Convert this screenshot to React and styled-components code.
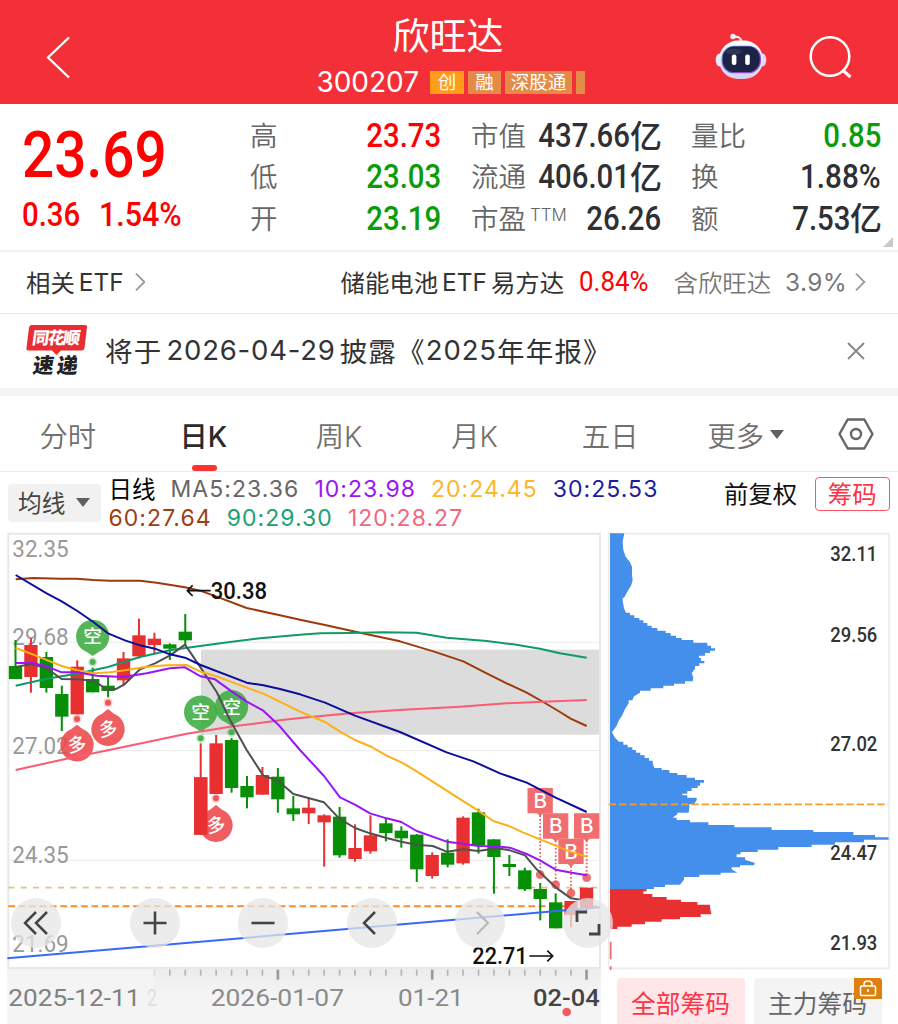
import React from "react";
import styled, { createGlobalStyle } from "styled-components";

const GlobalStyle = createGlobalStyle`
  * {
    box-sizing: border-box;
  }
  body {
    margin: 0;
    background: #fff;
    font-family: Inter, "Noto Sans CJK SC", sans-serif;
    color: #333;
  }
  button {
    border: 0;
    padding: 0;
    background: none;
    font: inherit;
    color: inherit;
  }
`;

const RED = "#fe0000";
const GREEN = "#0a9c0a";
const DARK = "#2f3033";

const Page = styled.div`
  width: 898px;
  height: 1024px;
  overflow: hidden;
  background: #fff;
`;

const Header = styled.header`
  display: grid;
  grid-template-columns: 300px 300px 1fr;
  height: 104px;
  background: #f33038;
  color: #fff;
`;

const BackButton = styled.button`
  display: flex;
  padding: 35px 0 0 44px;
`;

const TitleBlock = styled.div`
  display: flex;
  flex-direction: column;
  align-items: center;
  padding-top: 12px;
`;

const Title = styled.h1`
  margin: 0;
  font-family: "Noto Sans CJK SC", sans-serif;
  font-size: 37px;
  font-weight: 400;
  line-height: 44px;
  margin-left: -4px;
`;

const CodeLine = styled.div`
  display: flex;
  align-items: center;
  gap: 4px;
  height: 23px;
  margin: 15px -1px 0 0;
`;

const Code = styled.span`
  font-size: 28px;
  font-weight: 400;
  line-height: 23px;
  margin-right: 7px;
`;

const Tag = styled.span`
  height: 23px;
  width: ${(p) => p.$width}px;
  background: ${(p) => p.$color || "#e58b48"};
  font-family: "Noto Sans CJK SC", sans-serif;
  font-size: 18.5px;
  line-height: 21px;
  text-align: center;
  white-space: nowrap;
`;

const HeaderActions = styled.div`
  display: flex;
  align-items: flex-start;
  gap: 41px;
  padding: 32px 0 0 115px;
`;

const Quote = styled.section`
  display: grid;
  grid-template-columns: 228px 191px 190px 190px;
  position: relative;
  height: 148px;
  padding: 11px 0 0 22px;
  border-bottom: 2px solid #f1f1f1;
`;

const PriceBlock = styled.div`
  color: ${RED};
`;

const Digits = styled.span`
  display: inline-block;
  font-family: Roboto, sans-serif;
  font-size: ${(p) => p.$size || 33}px;
  font-weight: ${(p) => p.$weight || 500};
  transform: scaleX(${(p) => p.$squeeze || 0.89});
  transform-origin: ${(p) => p.$origin || "right"} center;
  white-space: nowrap;
`;

const LastPrice = styled.div`
  height: 80px;
  line-height: 80px;
`;

const Changes = styled.div`
  display: flex;
  height: 40px;
  line-height: 40px;
`;

const Change = styled.div`
  width: ${(p) => p.$width}px;
`;

const StatColumn = styled.div`
  display: flex;
  flex-direction: column;
  margin-left: ${(p) => p.$shift || 0}px;
  margin-right: ${(p) => -(p.$shift || 0)}px;
`;

const Stat = styled.div`
  display: flex;
  justify-content: space-between;
  align-items: center;
  height: 41.3px;
`;

const StatLabel = styled.span`
  font-family: "Noto Sans CJK SC", sans-serif;
  font-size: 27.5px;
  line-height: 40px;
  margin-top: -3px;
  font-weight: 350;
  color: #666;
  white-space: nowrap;
`;

const Ttm = styled.sup`
  display: inline-block;
  font-family: Inter, sans-serif;
  font-size: 17px;
  font-weight: 350;
  line-height: 1;
  vertical-align: 8px;
  margin-left: 4px;
`;

const StatValue = styled.span`
  display: flex;
  align-items: center;
  color: ${(p) => p.$color || DARK};
`;

const Unit = styled.span`
  font-family: "Noto Sans CJK SC", sans-serif;
  font-size: 32px;
  font-weight: 500;
  line-height: 36px;
  margin: -4px -1px 0 0;
`;

const Corner = styled.i`
  position: absolute;
  right: 5px;
  bottom: 3px;
  border: 5px solid #c9c9c9;
  border-top-color: transparent;
  border-left-color: transparent;
`;

const EtfRow = styled.section`
  display: flex;
  align-items: center;
  height: 62px;
  padding: 0 32px 2px 26px;
  border-bottom: 1px solid #ebebeb;
  font-size: 24.4px;
  line-height: 36px;
`;

const EtfText = styled.span`
  display: flex;
  align-items: center;
  gap: 4px;
  margin-left: ${(p) => p.$left || 0}px;
  color: ${(p) => p.$color || "#333"};
  white-space: nowrap;
`;

const Cjk = styled.span`
  font-family: "Noto Sans CJK SC", sans-serif;
  font-weight: ${(p) => p.$weight || 400};
`;

const Latin = styled.span`
  font-weight: ${(p) => p.$weight || 400};
  letter-spacing: ${(p) => p.$spacing || 0}px;
`;

const Notice = styled.section`
  display: flex;
  align-items: center;
  height: 74px;
  padding: 0 33px 0 24px;
`;

const NoticeText = styled.p`
  display: flex;
  align-items: center;
  flex: 1;
  margin: 0 0 3px 15px;
  font-size: 27.5px;
  line-height: 40px;
  letter-spacing: 1.2px;
  white-space: nowrap;
`;

const NoticeDate = styled.span`
  margin: 0 4px 0 4px;
  letter-spacing: 0.8px;
`;

const Divider = styled.div`
  height: 8px;
  background: #f4f4f4;
`;

const Tabs = styled.nav`
  display: flex;
  height: 76px;
  border-bottom: 1px solid #ebebeb;
`;

const Tab = styled.button`
  display: flex;
  align-items: center;
  justify-content: center;
  position: relative;
  width: 135.6px;
  padding-top: 1px;
  font-family: Inter, "Noto Sans CJK SC", sans-serif;
  font-size: 28.3px;
  font-weight: ${(p) => (p.$active ? 500 : 350)};
  color: ${(p) => (p.$active ? "#2b2b2b" : "#707070")};
`;

const TabUnderline = styled.i`
  position: absolute;
  left: 56px;
  bottom: 0;
  width: 25px;
  height: 6.5px;
  border-radius: 4px;
  background: #fb342f;
`;

const Caret = styled.i`
  width: 0;
  height: 0;
  margin-left: ${(p) => p.$left}px;
  border: 7px solid transparent;
  border-top: 9px solid #606060;
  border-bottom: 0;
`;

const SettingsButton = styled.button`
  display: flex;
  align-items: center;
  justify-content: center;
  flex: 1;
`;

const IndicatorBar = styled.div`
  display: flex;
  height: 60px;
`;

const AverageSelect = styled.button`
  display: flex;
  align-items: center;
  width: 93px;
  height: 38px;
  margin: 12px 0 0 8px;
  padding: 0 0 2px 10px;
  border-radius: 4px;
  background: #f1f1f1;
  font-family: "Noto Sans CJK SC", sans-serif;
  font-size: 23.7px;
  color: #444;
`;

const Legend = styled.div`
  width: 623px;
  padding: 3px 0 0 7.5px;
`;

const LegendLine = styled.div`
  display: flex;
  gap: 15px;
  height: 29px;
  align-items: center;
  white-space: nowrap;
`;

const LegendItem = styled.span`
  color: ${(p) => p.$color};
  font-size: ${(p) => (p.$name ? 23.5 : 23)}px;
  font-weight: 400;
  line-height: 29px;
  letter-spacing: ${(p) => (p.$name ? 0 : 1.05)}px;
`;

const Adjust = styled.button`
  height: 40px;
  font-family: "Noto Sans CJK SC", sans-serif;
  font-size: 24.4px;
  color: #111;
  white-space: nowrap;
`;

const ChipToggle = styled.button`
  width: 75px;
  height: 34px;
  margin: 5px 0 0 17.5px;
  padding-bottom: 3px;
  border: 1.5px solid #fb5565;
  border-radius: 4px;
  font-family: "Noto Sans CJK SC", sans-serif;
  font-size: 24.4px;
  line-height: 28px;
  color: #fb3547;
`;

const ChartRow = styled.section`
  display: flex;
  position: relative;
  height: 492px;
`;

const ChartSvg = styled.svg`
  display: block;
  flex: none;
`;

const ChipColumn = styled.aside`
  width: 292px;
`;

const ChipTabs = styled.div`
  display: flex;
  gap: 9px;
  padding: 8px 0 0 10.5px;
`;

const ChipTab = styled.button`
  position: relative;
  width: 128px;
  height: 52px;
  padding-bottom: 5px;
  border-radius: 4px;
  background: ${(p) => (p.$active ? "#ffe7e9" : "#f4f4f4")};
  color: ${(p) => (p.$active ? "#fb3547" : "#666")};
  font-family: "Noto Sans CJK SC", sans-serif;
  font-size: 24.7px;
  line-height: 40px;
`;

const LockBadge = styled.span`
  position: absolute;
  top: 0;
  right: 0;
  display: flex;
  justify-content: center;
  width: 28px;
  height: 21px;
  border-radius: 0 3px 0 3px;
  background: #de800c;
`;

const ChartTools = styled.div`
  position: absolute;
  left: 11px;
  top: 366px;
  display: flex;
  gap: 58.4px;
`;

const ToolButton = styled.button`
  display: flex;
  align-items: center;
  justify-content: center;
  width: 50px;
  height: 50px;
  margin-right: ${(p) => p.$right || 0}px;
  border-radius: 50%;
  background: rgba(230, 230, 230, 0.76);
  color: ${(p) => (p.$disabled ? "#b9b9b9" : "#444")};
`;

// Chart geometry is kept at 3x resolution; [bodyTop, bodyBottom, high, low, up]
const CANDLES = [
  [408, 447, 330, 447, 0],
  [345, 441, 325, 488, 1],
  [381, 474, 366, 488, 0],
  [492, 560, 467, 603, 0],
  [410, 553, 391, 553, 1],
  [447, 487, 413, 487, 0],
  [467, 483, 441, 502, 0],
  [385, 451, 366, 467, 1],
  [316, 379, 266, 385, 1],
  [326, 345, 308, 373, 1],
  [343, 356, 340, 390, 0],
  [305, 331, 252, 345, 0],
  [742, 914, 640, 914, 1],
  [640, 792, 615, 792, 1],
  [630, 774, 624, 788, 0],
  [768, 802, 738, 835, 0],
  [735, 794, 711, 794, 1],
  [740, 808, 714, 848, 0],
  [835, 853, 798, 873, 0],
  [833, 850, 805, 882, 1],
  [856, 877, 853, 1010, 1],
  [860, 976, 831, 983, 0],
  [954, 987, 883, 995, 1],
  [916, 964, 856, 971, 1],
  [880, 909, 866, 934, 0],
  [902, 925, 889, 953, 0],
  [914, 1018, 912, 1056, 0],
  [975, 1038, 967, 1046, 1],
  [968, 1004, 928, 1012, 0],
  [863, 1000, 859, 1004, 1],
  [847, 947, 836, 971, 0],
  [928, 981, 928, 1091, 0],
  [1002, 1011, 975, 1038, 0],
  [1021, 1078, 1013, 1083, 0],
  [1077, 1107, 1059, 1171, 0],
  [1117, 1195, 1090, 1195, 0],
  [1113, 1155, 1113, 1192, 1],
  [1073, 1133, 1073, 1150, 1],
];

const candleX = (i) => 46.5 + i * 46.3;

const AVERAGES = [
  {
    color: "#9c3a0c",
    points:
      "47,148 100,144 180,146 230,146 280,150 330,152 420,152 470,158 555,172 600,182 650,200 740,234 840,256 900,269 975,285 1080,308 1200,334 1300,364 1390,394 1460,430 1520,460 1580,488 1630,516 1680,546 1712,566 1760,588",
  },
  {
    color: "#109a68",
    points:
      "47,467 140,446 230,431 324,411 420,381 510,361 600,348 690,336 780,325 900,314 960,310 1050,309 1150,307 1250,308 1340,323 1460,333 1540,343 1620,356 1680,370 1760,383",
  },
  {
    color: "#fb5b73",
    points:
      "47,720 200,686 324,661 560,611 700,589 840,571 900,564 1050,550 1210,539 1380,530 1520,520 1630,515 1760,510",
  },
  {
    color: "#505050",
    points:
      "47,411 95,402 140,415 185,447 232,448 280,452 324,480 350,476 372,464 420,418 465,400 510,376 555,344 600,410 650,486 690,570 740,660 790,737 835,753 880,792 900,797 972,817 1018,866 1065,894 1110,910 1160,924 1204,935 1250,944 1298,948 1340,965 1390,958 1435,963 1490,955 1530,961 1575,976 1610,1018 1667,1072 1713,1105 1740,1109 1760,1111",
  },
  {
    color: "#0c0c9e",
    points:
      "47,135 140,190 185,214 232,243 280,276 324,310 375,331 420,346 465,356 510,373 555,383 602,405 740,458 790,466 840,477 900,493 975,518 1065,557 1200,606 1340,667 1420,694 1500,730 1580,758 1667,803 1760,846",
  },
  {
    color: "#fdb014",
    points:
      "47,354 100,374 185,408 232,421 280,430 330,427 375,421 440,410 500,406 560,405 602,425 650,439 740,473 790,491 850,520 900,545 975,576 1020,605 1065,630 1115,651 1160,677 1210,700 1250,724 1340,782 1430,839 1480,873 1530,889 1570,908 1630,932 1710,965 1760,980",
  },
  {
    color: "#9a14f8",
    points:
      "47,399 95,399 140,409 185,427 232,427 290,437 370,441 440,430 510,415 555,412 602,439 645,448 695,484 740,515 790,542 835,584 900,660 972,738 1020,802 1065,824 1110,850 1160,865 1204,876 1250,903 1340,935 1390,941 1435,948 1490,949 1530,953 1580,972 1620,991 1667,1019 1720,1029 1760,1036",
  },
];

const BEAR_PINS = [
  [278, 320, 396],
  [602, 547, 625],
  [694.5, 531, 607],
];

const BULL_PINS = [
  [231, 644, 567],
  [324, 597, 518],
  [648, 885, 805],
];

const BUYS = [
  [1620.5, 812, 1034],
  [1667, 888, 1064],
  [1713, 964, 1089],
  [1760, 888, 1043],
];

const PRICE_LABELS = [
  ["32.35", 82],
  ["29.68", 345],
  ["27.02", 672],
  ["24.35", 1000],
  ["21.69", 1265],
];

const CHIPS_ABOVE = [
  [73, 10], [68, 35], [70, 60], [77, 80], [90, 97], [96, 110], [96, 135], [98, 150],
  [94, 165], [85, 180], [72, 203], [68, 212], [72, 235], [78, 248], [90, 256], [103, 264],
  [118, 271], [130, 279], [142, 287], [155, 294], [172, 302], [197, 309], [212, 317],
  [228, 324], [245, 330], [280, 338], [322, 347], [333, 355], [345, 362], [330, 369],
  [315, 377], [297, 384], [303, 393], [313, 400], [298, 408], [285, 416], [275, 430],
  [280, 442], [278, 454], [255, 461], [222, 467], [190, 475], [152, 482], [120, 488],
  [102, 499], [97, 511], [86, 520], [75, 537], [66, 557], [57, 570], [50, 587], [36, 607],
  [45, 623], [57, 635], [70, 644], [83, 652], [97, 660], [108, 668], [121, 676], [134, 684],
  [147, 692], [158, 700], [163, 714], [185, 720], [208, 729], [232, 735], [260, 743],
  [285, 750], [312, 758], [300, 767], [293, 774], [275, 783], [262, 791], [247, 796],
  [262, 803], [290, 811], [282, 823], [268, 830], [266, 848], [232, 853], [218, 863],
  [230, 870], [270, 877], [325, 885], [403, 892], [515, 900], [640, 906], [760, 915],
  [825, 922], [866, 929], [792, 937], [705, 944], [635, 951], [535, 959], [473, 966],
  [422, 973], [410, 982], [435, 989], [468, 1000], [463, 1006], [420, 1012], [395, 1018],
  [412, 1028], [362, 1034], [298, 1041], [252, 1049], [240, 1064], [195, 1071], [162, 1077],
];

const CHIPS_BELOW = [
  [140, 1084], [130, 1092], [157, 1101], [200, 1109], [243, 1116], [292, 1124], [330, 1131],
  [332, 1142], [334, 1153], [302, 1161], [240, 1168], [185, 1175], [135, 1183], [95, 1190],
  [52, 1197],
];

// each row is [width, bottom edge]; tall rows slope, thin rows are stepped
const stepPath = (rows, top) => {
  let prev = top;
  let d = `M30 ${top}`;
  rows.forEach(([x, y]) => {
    d += y - prev > 9 ? `L${x} ${y}` : `H${x}V${y}`;
    prev = y;
  });
  return d + "H30Z";
};

const CHIP_LABELS = [
  ["32.11", 92],
  ["29.56", 337],
  ["27.02", 663],
  ["24.47", 990],
  ["21.93", 1260],
];

const Pin = ({ x, y, dot, down, label }) => {
  const color = down ? "#3dac41" : "#ec4749";
  const tip = down ? y + 58 : y - 60;
  const edge = down ? y + 46 : y - 46;
  return (
    <g fill={color}>
      <circle cx={x} cy={dot} r="14" opacity=".25" />
      <circle cx={x} cy={dot} r="9" opacity=".9" />
      <path
        opacity=".88"
        d={`M${x + 18} ${edge}L${x} ${tip}L${x - 18} ${edge}A50 50 0 1 ${
          down ? 1 : 0
        } ${x + 18} ${edge}Z`}
      />
      <text
        x={x}
        y={y + 20}
        textAnchor="middle"
        fontFamily="Noto Sans CJK SC, sans-serif"
        fontSize="56"
        fontWeight="500"
        fill="#fff"
        transform={down ? undefined : `rotate(-8 ${x} ${y})`}
      >
        {label}
      </text>
    </g>
  );
};

const ChartText = ({ x, y, width, size = 72, fill = "#999", weight = 400, children }) => (
  <text
    x={x}
    y={y}
    textLength={width}
    lengthAdjust="spacingAndGlyphs"
    fontFamily="Roboto, sans-serif"
    fontSize={size}
    fontWeight={weight}
    fill={fill}
  >
    {children}
  </text>
);

const KLineChart = () => (
  <ChartSvg width="606" height="492" viewBox="0 6 1818 1476">
    <defs>
      <linearGradient id="axis" x1="0" y1="0" x2="0" y2="1">
        <stop offset="0" stopColor="#ececec" />
        <stop offset=".45" stopColor="#f4f4f4" />
      </linearGradient>
    </defs>
    <rect x="22" y="1317" width="1780" height="170" fill="#f4f4f4" />
    <rect x="460" y="1317" width="1342" height="170" fill="url(#axis)" />
    <rect x="603" y="359" width="1196" height="255" fill="#dcdcdc" />
    <g stroke="#eee" strokeWidth="4">
      <path d="M25 337H1799M25 662H1799M25 991H1799" />
    </g>
    <path d="M25 1314V11H1800V1314Z" fill="none" stroke="#e8e8e8" strokeWidth="6" />
    <path d="M25 1073H1800" stroke="#e0bf93" strokeWidth="5" strokeDasharray="18 19.2" />
    <path d="M25 1129H1800" stroke="#f98a2c" strokeWidth="6" strokeDasharray="20 11.2" />

    {PRICE_LABELS.map(([label, y]) => (
      <ChartText key={label} x={37} y={y} width={169} weight={450}>
        {label}
      </ChartText>
    ))}

    {CANDLES.map(([top, bottom, high, low, up], i) => (
      <g key={i} fill={up ? "#e83031" : "#079007"}>
        <rect x={candleX(i) - 3} y={high} width="6" height={low - high} />
        <rect x={candleX(i) - 20} y={top} width="40" height={bottom - top} />
      </g>
    ))}

    {BULL_PINS.map(([x, y, dot]) => (
      <Pin key={x} x={x} y={y} dot={dot} label="多" />
    ))}
    {BEAR_PINS.map(([x, y, dot]) => (
      <Pin key={x} x={x} y={y} dot={dot} down label="空" />
    ))}
    <rect x="582" y="742" width="40" height="172" fill="#e83031" />

    {BUYS.map(([x, y, dot]) => (
      <g key={x} fill="#ee5557">
        <path
          d={`M${x} ${y + 44}V${dot}`}
          stroke="#ee5557"
          strokeWidth="5"
          strokeDasharray="5 6"
        />
        <circle cx={x} cy={dot} r="13" opacity=".85" />
        <path
          d={`M${x - 38} ${y - 38}h76v76h-28l-10 9l-10 -9h-28z`}
          opacity=".85"
        />
        <text
          x={x}
          y={y + 22}
          textAnchor="middle"
          fontFamily="Inter, sans-serif"
          fontSize="62"
          fontWeight="500"
          fill="#fff"
        >
          B
        </text>
      </g>
    ))}

    <path d="M22 1285L1800 1132" stroke="#3868fb" strokeWidth="6" />
    {AVERAGES.map((line) => (
      <polyline
        key={line.color}
        points={line.points}
        fill="none"
        stroke={line.color}
        strokeWidth="6"
        strokeLinejoin="round"
      />
    ))}

    <g fill="none" stroke="#111" strokeWidth="5">
      <path d="M632 182H562M578 166L562 182L578 198" />
      <path d="M1588 1278H1658M1642 1262L1658 1278L1642 1294" />
    </g>
    <ChartText x={632} y={206} width={169} fill="#111" weight={500}>
      30.38
    </ChartText>
    <ChartText x={1417} y={1303} width={166} fill="#111" weight={500}>
      22.71
    </ChartText>

    {CANDLES.map((_, i) =>
      i < 9 ? null : (
        <rect
          key={i}
          x={candleX(i) - (i % 10 === 7 ? 4 : 2.5)}
          y="1319"
          width={i % 10 === 7 ? 8 : 5}
          height={i % 10 === 7 ? 30 : 18}
          fill={i === 9 ? "#ddd" : i % 10 === 7 ? "#999" : "#b5b5b5"}
        />
      )
    )}
    <ChartText x={25} y={1427} width={396} fill="#808080">
      2025-12-11
    </ChartText>
    <ChartText x={441} y={1427} width={30} fill="#dedede">
      2
    </ChartText>
    <ChartText x={632} y={1427} width={400} fill="#8a8a8a">
      2026-01-07
    </ChartText>
    <ChartText x={1194} y={1427} width={197} fill="#8a8a8a">
      01-21
    </ChartText>
    <ChartText x={1599} y={1427} width={200} fill="#444" weight={500}>
      02-04
    </ChartText>
    <circle cx="1700" cy="1446" r="13" fill="#f25a60" />
  </ChartSvg>
);

const ChipChart = () => (
  <ChartSvg width="292" height="438" viewBox="18 6 876 1314">
    <path
      d="M26 11H867V1315H26Z"
      fill="none"
      stroke="#ececec"
      strokeWidth="5"
    />
    <path d={stepPath(CHIPS_ABOVE, 10)} fill="#448feb" />
    <path d={stepPath(CHIPS_BELOW, 1077)} fill="#e83031" />
    <path d="M32 1235V1288M32 1309V1320" stroke="#e86a6c" strokeWidth="5" />
    <path
      d="M26 823H864"
      stroke="#f5a02c"
      strokeWidth="5"
      strokeDasharray="22 9"
    />
    {CHIP_LABELS.map(([label, y]) => (
      <ChartText key={label} x={691} y={y} width={141} size={62} fill="#333" weight={500}>
        {label}
      </ChartText>
    ))}
  </ChartSvg>
);

const RobotIcon = () => (
  <svg width="52" height="48" viewBox="0 0 52 48">
    <defs>
      <linearGradient id="shell" x1="0" y1="0" x2="0" y2="1">
        <stop offset="0" stopColor="#fff" />
        <stop offset="1" stopColor="#d5d2f3" />
      </linearGradient>
      <linearGradient id="visor" x1="0" y1="0" x2="1" y2="1">
        <stop offset="0" stopColor="#5ab4d8" />
        <stop offset=".5" stopColor="#6a4fd0" />
        <stop offset="1" stopColor="#a04fd8" />
      </linearGradient>
    </defs>
    <path d="M18 5.200Q26 3.500 26.500 10" fill="none" stroke="#f3ecfa" strokeWidth="2" />
    <circle cx="18" cy="4.500" r="2.700" fill="#f6eefb" />
    <ellipse cx="4.300" cy="28" rx="3.600" ry="6.500" fill="#efeafc" />
    <ellipse cx="47.700" cy="28" rx="3.600" ry="6.500" fill="#dcd8f8" />
    <rect x="4" y="8.500" width="44" height="38.500" rx="19" fill="url(#shell)" />
    <rect x="6.500" y="13.800" width="39.500" height="27.500" rx="12.500" fill="url(#visor)" />
    <rect x="7.700" y="14.600" width="37" height="25.500" rx="11.500" fill="#1c2344" />
    <ellipse cx="19" cy="19.500" rx="8" ry="2.800" fill="#3a4468" opacity=".6" />
    <rect x="16.800" y="22.500" width="4.600" height="10.500" rx="2" fill="#fff" />
    <rect x="30.200" y="22.500" width="4.600" height="10.500" rx="2" fill="#fff" />
  </svg>
);

const ExpressLogo = () => (
  <svg width="66" height="54" viewBox="0 0 66 54">
    <path
      d="M7.500 1H61Q63.500 1 63 3.500L60.500 24Q60 26.500 57.500 26.500H37L32.500 31L28 26.500H4.500Q2 26.500 2.500 24L5 3.500Q5.500 1 7.500 1Z"
      fill="#e92d31"
    />
    <g
      fontFamily="Noto Sans CJK SC, sans-serif"
      fontWeight="900"
      transform="skewX(-8)"
    >
      <text x="10.500" y="20.500" fontSize="17" textLength="48" fill="#fff">
        同花顺
      </text>
      <text x="15" y="49.500" fontSize="21" textLength="45" fill="#222">
        速递
      </text>
    </g>
  </svg>
);

const ChevronSvg = styled.svg`
  margin-left: ${(p) => p.$left}px;
`;

const Chevron = ({ left }) => (
  <ChevronSvg $left={left} width="11" height="20" viewBox="0 0 11 20">
    <path d="M1 1.500L9.500 10L1 18.500" fill="none" stroke="#999" strokeWidth="1.800" />
  </ChevronSvg>
);

const StatItem = ({ label, value, unit, color, sup, squeeze }) => (
  <Stat>
    <StatLabel>
      {label}
      {sup && <Ttm>{sup}</Ttm>}
    </StatLabel>
    <StatValue $color={color}>
      <Digits $squeeze={squeeze}>{value}</Digits>
      {unit && <Unit>{unit}</Unit>}
    </StatValue>
  </Stat>
);

const App = () => {
  return (
    <Page>
      <GlobalStyle />
      <Header>
        <BackButton>
          <svg width="28" height="46" viewBox="0 0 28 46">
            <path d="M25 2.500L4 22.500L25 42.500" fill="none" stroke="#fff" strokeWidth="2.300" />
          </svg>
        </BackButton>
        <TitleBlock>
          <Title>欣旺达</Title>
          <CodeLine>
            <Code>300207</Code>
            <Tag $width={34} $color="#ff9c1a">创</Tag>
            <Tag $width={33}>融</Tag>
            <Tag $width={67}>深股通</Tag>
            <Tag $width={8.5} />
          </CodeLine>
        </TitleBlock>
        <HeaderActions>
          <RobotIcon />
          <svg width="46" height="48" viewBox="0 0 46 48">
            <circle cx="22" cy="24.500" r="19.300" fill="none" stroke="#fff" strokeWidth="2.500" />
            <path d="M34.500 38L42.500 45" stroke="#fff" strokeWidth="3" />
          </svg>
        </HeaderActions>
      </Header>

      <Quote>
        <PriceBlock>
          <LastPrice>
            <Digits $size={65} $origin="left" $squeeze={0.872}>23.69</Digits>
          </LastPrice>
          <Changes>
            <Change $width={77}>
              <Digits $origin="left">0.36</Digits>
            </Change>
            <Change $width={100}>
              <Digits $origin="left" $squeeze={0.92}>1.54%</Digits>
            </Change>
          </Changes>
        </PriceBlock>
        <StatColumn>
          <StatItem label="高" value="23.73" color={RED} />
          <StatItem label="低" value="23.03" color={GREEN} />
          <StatItem label="开" value="23.19" color={GREEN} />
        </StatColumn>
        <StatColumn $shift={30}>
          <StatItem label="市值" value="437.66" unit="亿" />
          <StatItem label="流通" value="406.01" unit="亿" />
          <StatItem label="市盈" sup="TTM" value="26.26" />
        </StatColumn>
        <StatColumn $shift={60}>
          <StatItem label="量比" value="0.85" color={GREEN} />
          <StatItem label="换" value="1.88%" squeeze={0.9} />
          <StatItem label="额" value="7.53" unit="亿" />
        </StatColumn>
        <Corner />
      </Quote>

      <EtfRow>
        <EtfText>
          <Cjk>相关</Cjk>
          <Latin>ETF</Latin>
        </EtfText>
        <Chevron left={11} />
        <EtfText $left={195}>
          <Cjk>储能电池</Cjk>
          <Latin>ETF</Latin>
          <Cjk>易方达</Cjk>
        </EtfText>
        <EtfText $left={15} $color={RED}>
          <Digits $size={27} $origin="left" $squeeze={0.96} $weight={450}>0.84%</Digits>
        </EtfText>
        <EtfText $left={22} $color="#777">
          <Cjk $weight={350}>含欣旺达</Cjk>
        </EtfText>
        <EtfText $left={14} $color="#777">
          <Latin $spacing={0.4}>3.9%</Latin>
        </EtfText>
        <Chevron left={8} />
      </EtfRow>

      <Notice>
        <ExpressLogo />
        <NoticeText>
          <Cjk>将于</Cjk>
          <NoticeDate>2026-04-29</NoticeDate>
          <Cjk>披露《</Cjk>
          <Latin $spacing={0.9}>2025</Latin>
          <Cjk>年年报》</Cjk>
        </NoticeText>
        <svg width="18" height="18" viewBox="0 0 18 18">
          <path d="M1 1L17 17M17 1L1 17" stroke="#8a8a8a" strokeWidth="2" />
        </svg>
      </Notice>
      <Divider />

      <Tabs>
        <Tab>分时</Tab>
        <Tab $active>
          日K
          <TabUnderline />
        </Tab>
        <Tab>周K</Tab>
        <Tab>月K</Tab>
        <Tab>五日</Tab>
        <Tab>
          更多
          <Caret $left={6} />
        </Tab>
        <SettingsButton>
          <svg width="36" height="32" viewBox="0 0 36 32">
            <path
              d="M9.700 1.500H26.300L34.500 16L26.300 30.500H9.700L1.500 16Z"
              fill="none"
              stroke="#666"
              strokeWidth="2.400"
              strokeLinejoin="round"
            />
            <circle cx="18" cy="16" r="5" fill="none" stroke="#666" strokeWidth="2.400" />
          </svg>
        </SettingsButton>
      </Tabs>

      <IndicatorBar>
        <AverageSelect>
          均线
          <Caret $left={11} />
        </AverageSelect>
        <Legend>
          <LegendLine>
            <LegendItem $color="#000" $name>日线</LegendItem>
            <LegendItem $color="#666">MA5:23.36</LegendItem>
            <LegendItem $color="#9a14f8">10:23.98</LegendItem>
            <LegendItem $color="#fdb52b">20:24.45</LegendItem>
            <LegendItem $color="#1c1ca4">30:25.53</LegendItem>
          </LegendLine>
          <LegendLine>
            <LegendItem $color="#9c3f14">60:27.64</LegendItem>
            <LegendItem $color="#1c9f72">90:29.30</LegendItem>
            <LegendItem $color="#f5647c">120:28.27</LegendItem>
          </LegendLine>
        </Legend>
        <Adjust>前复权</Adjust>
        <ChipToggle>筹码</ChipToggle>
      </IndicatorBar>

      <ChartRow>
        <KLineChart />
        <ChipColumn>
          <ChipChart />
          <ChipTabs>
            <ChipTab $active>全部筹码</ChipTab>
            <ChipTab>
              主力筹码
              <LockBadge>
                <svg width="18" height="20" viewBox="0 0 18 20">
                  <g fill="none" stroke="#fff" strokeWidth="1.500">
                    <rect x="1.500" y="8" width="15" height="9.500" rx="1" />
                    <path d="M5 8V6Q5 3 9 3Q13 3 13 6V8M9 11V14" />
                  </g>
                </svg>
              </LockBadge>
            </ChipTab>
          </ChipTabs>
        </ChipColumn>
        <ChartTools>
          <ToolButton $right={10.5}>
            <svg width="26" height="26" viewBox="0 0 26 26">
              <path d="M13 2L2 13L13 24M24 2L13 13L24 24" fill="none" stroke="currentColor" strokeWidth="2.500" />
            </svg>
          </ToolButton>
          <ToolButton>
            <svg width="24" height="24" viewBox="0 0 24 24">
              <path d="M12 .5V23.500M.5 12H23.500" stroke="currentColor" strokeWidth="2.600" />
            </svg>
          </ToolButton>
          <ToolButton>
            <svg width="24" height="24" viewBox="0 0 24 24">
              <path d="M.5 12H23.500" stroke="currentColor" strokeWidth="2.600" />
            </svg>
          </ToolButton>
          <ToolButton>
            <svg width="26" height="26" viewBox="0 0 26 26">
              <path d="M16 2L5 13L16 24" fill="none" stroke="currentColor" strokeWidth="2.500" />
            </svg>
          </ToolButton>
          <ToolButton $disabled>
            <svg width="26" height="26" viewBox="0 0 26 26">
              <path d="M10 2L21 13L10 24" fill="none" stroke="currentColor" strokeWidth="2.200" />
            </svg>
          </ToolButton>
          <ToolButton>
            <svg width="26" height="26" viewBox="0 0 26 26">
              <path d="M2 12V2H12M24 14V24H14" fill="none" stroke="currentColor" strokeWidth="2.800" />
            </svg>
          </ToolButton>
        </ChartTools>
      </ChartRow>
    </Page>
  );
};

export default App;
